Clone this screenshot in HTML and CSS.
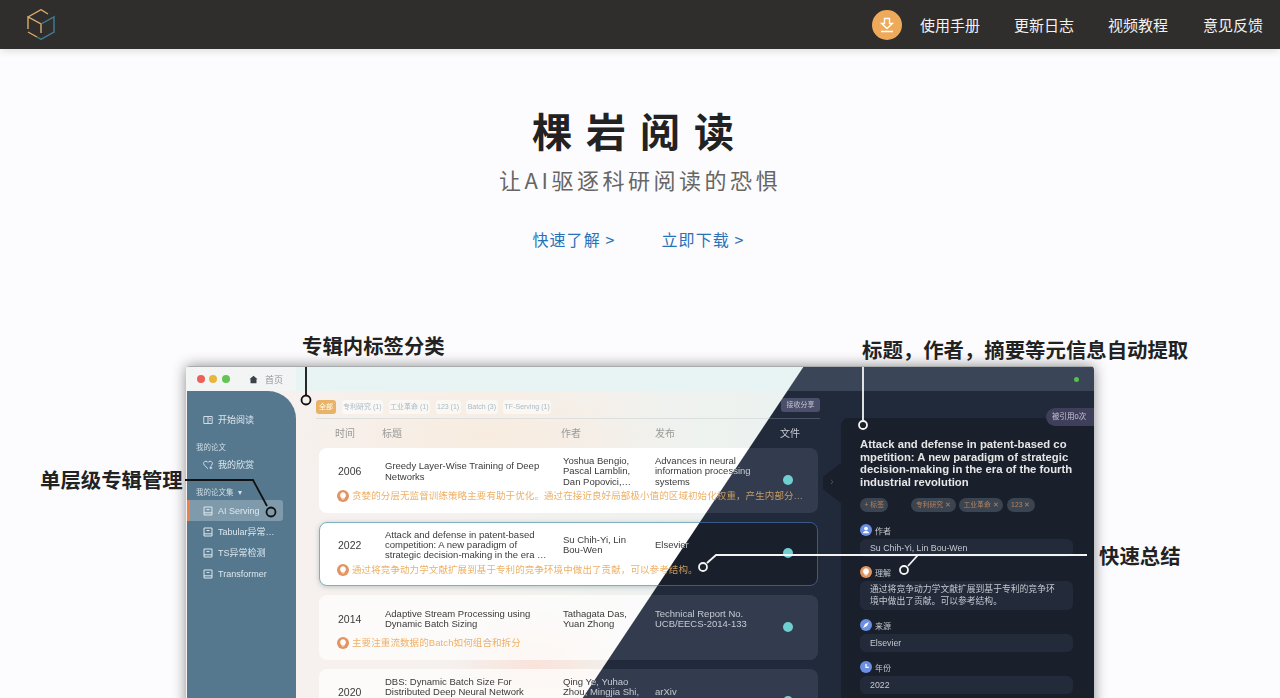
FILE: index.html
```html
<!DOCTYPE html>
<html lang="zh-CN">
<head>
    <meta charset="UTF-8">
    <meta name="viewport" content="width=device-width, initial-scale=1.0">
    <title>棵岩阅读</title>
    <link rel="stylesheet" href="styles.css">
</head>
<body>
    <svg class="sprites" width="0" height="0">
        <symbol id="i-book" viewBox="0 0 10 10"><path d="M1 1h8v8h-8zM1 6.800h8M3.500 3.600h3" fill="none" stroke="currentColor" stroke-width="1"/></symbol>
        <symbol id="i-read" viewBox="0 0 10 10"><path d="M.8 1.500h8.400v7H.8zM5 1.500v7M6.300 3.500h1.600M6.300 5.200h1.600" fill="none" stroke="currentColor" stroke-width=".9"/></symbol>
        <symbol id="i-heart" viewBox="0 0 10 10"><path d="M5 8.800 1.200 5C-.2 3.200 1 1.200 2.900 1.200 4 1.200 4.600 1.800 5 2.400 5.400 1.800 6 1.200 7.100 1.200 9 1.200 10.200 3.200 8.800 5L7.600 6.200M6.500 7.800h2.800M7.900 6.400v2.800" fill="none" stroke="currentColor" stroke-width=".9"/></symbol>
        <symbol id="i-bulb" viewBox="0 0 12 12"><circle cx="6" cy="6" r="6" fill="#e2935f"/><path d="M6 2.500a2.800 2.800 0 0 1 1.700 5L7.500 8.300h-3L4.300 7.500A2.800 2.800 0 0 1 6 2.500zM4.800 9.300h2.400" fill="#fff" stroke="#fff" stroke-width=".5"/></symbol>
        <symbol id="i-user" viewBox="0 0 12 12"><circle cx="6" cy="6" r="6" fill="#6b8fe3"/><circle cx="6" cy="4.600" r="1.900" fill="#fff"/><path d="M2.800 9.300c.4-1.800 1.700-2.300 3.200-2.300s2.800.5 3.200 2.300z" fill="#fff"/></symbol>
        <symbol id="i-compass" viewBox="0 0 12 12"><circle cx="6" cy="6" r="6" fill="#6b8fe3"/><path d="M9 3 7 7 3 9l2-4z" fill="#fff"/></symbol>
        <symbol id="i-clock" viewBox="0 0 12 12"><circle cx="6" cy="6" r="6" fill="#6b8fe3"/><path d="M6 3v3.400h2.800" fill="none" stroke="#fff" stroke-width="1.300"/></symbol>
    </svg>

    <header class="topbar">
        <svg class="logo" viewBox="0 0 28 31" width="28" height="31">
            <g fill="none" stroke-width="1.400">
                <path d="M14 24V15L1 8V20M1 8 14 .7 21 5M1 23l9 5" stroke="#d9ac6c"/>
                <path d="M14 15 27 8V23L14 30.300 10 28" stroke="#3d7f96"/>
            </g>
        </svg>
        <nav class="topnav">
            <a class="dl-btn" href="#">
                <svg viewBox="0 0 16 16" width="16" height="16"><path d="M5.500 1.500h5v5h3L8 11.500 2.500 6.500h3zM2 14.500h12" fill="none" stroke="#fff" stroke-width="1.300"/></svg>
            </a>
            <a href="#">使用手册</a>
            <a href="#">更新日志</a>
            <a href="#">视频教程</a>
            <a href="#">意见反馈</a>
        </nav>
    </header>

    <section class="hero">
        <h1>棵岩阅读</h1>
        <p class="slogan">让AI驱逐科研阅读的恐惧</p>
        <div class="hero-links">
            <a href="#">快速了解 &gt;</a>
            <a href="#">立即下载 &gt;</a>
        </div>
    </section>

    <section class="stage">
        <div class="app">
            <!-- light half -->
            <div class="view view-light">
                <div class="titlebar">
                    <div class="tab">
                        <i class="light red"></i><i class="light yellow"></i><i class="light green"></i>
                        <svg class="home" viewBox="0 0 10 10" width="9" height="9"><path d="M5 .8 9.500 4.800H8.300V9.200H1.700V4.800H.5z" fill="#3c4248"/></svg>
                        <span>首页</span>
                    </div>
                </div>
                <aside class="sidebar">
                    <a class="side-item first"><svg><use href="#i-read"/></svg>开始阅读</a>
                    <div class="side-label">我的论文</div>
                    <a class="side-item"><svg><use href="#i-heart"/></svg>我的欣赏</a>
                    <div class="side-label">我的论文集 &nbsp;▾</div>
                    <a class="side-item active"><svg><use href="#i-book"/></svg>AI Serving</a>
                    <a class="side-item"><svg><use href="#i-book"/></svg>Tabular异常…</a>
                    <a class="side-item"><svg><use href="#i-book"/></svg>TS异常检测</a>
                    <a class="side-item"><svg><use href="#i-book"/></svg>Transformer</a>
                </aside>
                <main class="main">
                    <div class="tags">
                        <span class="tag on">全部</span>
                        <span class="tag">专利研究 (1)</span>
                        <span class="tag">工业革命 (1)</span>
                        <span class="tag">123 (1)</span>
                        <span class="tag">Batch (3)</span>
                        <span class="tag">TF-Serving (1)</span>
                    </div>
                    <div class="thead"><span>时间</span><span>标题</span><span>作者</span><span>发布</span><span>文件</span></div>
                    <div class="row">
                        <span class="year">2006</span>
                        <span>Greedy Layer-Wise Training of Deep<br>Networks</span>
                        <span>Yoshua Bengio,<br>Pascal Lamblin,<br>Dan Popovici,…</span>
                        <span>Advances in neural<br>information processing<br>systems</span>
                        <i class="dot"></i>
                        <p class="note"><svg><use href="#i-bulb"/></svg><span>贪婪的分层无监督训练策略主要有助于优化。通过在接近良好局部极小值的区域初始化权重，产生内部分…</span></p>
                    </div>
                    <div class="row selected">
                        <span class="year">2022</span>
                        <span>Attack and defense in patent-based<br>competition: A new paradigm of<br>strategic decision-making in the era …</span>
                        <span>Su Chih-Yi, Lin<br>Bou-Wen</span>
                        <span>Elsevier</span>
                        <i class="dot"></i>
                        <p class="note"><svg><use href="#i-bulb"/></svg><span>通过将竞争动力学文献扩展到基于专利的竞争环境中做出了贡献，可以参考结构。</span></p>
                    </div>
                    <div class="row">
                        <span class="year">2014</span>
                        <span>Adaptive Stream Processing using<br>Dynamic Batch Sizing</span>
                        <span>Tathagata Das,<br>Yuan Zhong</span>
                        <span>Technical Report No.<br>UCB/EECS-2014-133</span>
                        <i class="dot"></i>
                        <p class="note"><svg><use href="#i-bulb"/></svg><span>主要注重流数据的Batch如何组合和拆分</span></p>
                    </div>
                    <div class="row">
                        <span class="year">2020</span>
                        <span class="from-top">DBS: Dynamic Batch Size For<br>Distributed Deep Neural Network</span>
                        <span class="from-top">Qing Ye, Yuhao<br>Zhou, Mingjia Shi,</span>
                        <span>arXiv</span>
                        <i class="dot"></i>
                    </div>
                </main>
            </div>

            <!-- dark half, same table cut along the diagonal -->
            <div class="view view-dark">
                <div class="titlebar"><i class="status"></i></div>
                <main class="main">
                    <div class="tags"><span class="tag share">接收分享</span></div>
                    <div class="thead"><span>时间</span><span>标题</span><span>作者</span><span>发布</span><span>文件</span></div>
                    <div class="row">
                        <span class="year">2006</span>
                        <span>Greedy Layer-Wise Training of Deep<br>Networks</span>
                        <span>Yoshua Bengio,<br>Pascal Lamblin,<br>Dan Popovici,…</span>
                        <span>Advances in neural<br>information processing<br>systems</span>
                        <i class="dot"></i>
                        <p class="note"><svg><use href="#i-bulb"/></svg><span>贪婪的分层无监督训练策略主要有助于优化。通过在接近良好局部极小值的区域初始化权重，产生内部分…</span></p>
                    </div>
                    <div class="row selected">
                        <span class="year">2022</span>
                        <span>Attack and defense in patent-based<br>competition: A new paradigm of<br>strategic decision-making in the era …</span>
                        <span>Su Chih-Yi, Lin<br>Bou-Wen</span>
                        <span>Elsevier</span>
                        <i class="dot"></i>
                        <p class="note"><svg><use href="#i-bulb"/></svg><span>通过将竞争动力学文献扩展到基于专利的竞争环境中做出了贡献，可以参考结构。</span></p>
                    </div>
                    <div class="row">
                        <span class="year">2014</span>
                        <span>Adaptive Stream Processing using<br>Dynamic Batch Sizing</span>
                        <span>Tathagata Das,<br>Yuan Zhong</span>
                        <span>Technical Report No.<br>UCB/EECS-2014-133</span>
                        <i class="dot"></i>
                        <p class="note"><svg><use href="#i-bulb"/></svg><span>主要注重流数据的Batch如何组合和拆分</span></p>
                    </div>
                    <div class="row">
                        <span class="year">2020</span>
                        <span class="from-top">DBS: Dynamic Batch Size For<br>Distributed Deep Neural Network</span>
                        <span class="from-top">Qing Ye, Yuhao<br>Zhou, Mingjia Shi,</span>
                        <span>arXiv</span>
                        <i class="dot"></i>
                    </div>
                </main>
                <aside class="detail">
                    <span class="cited">被引用0次</span>
                    <span class="handle">›</span>
                    <h3>Attack and defense in patent-based co<br>mpetition: A new paradigm of strategic<br>decision-making in the era of the fourth<br>industrial revolution</h3>
                    <div class="chips">
                        <span class="chip add">+ 标签</span>
                        <span class="chip">专利研究 ✕</span>
                        <span class="chip">工业革命 ✕</span>
                        <span class="chip">123 ✕</span>
                    </div>
                    <div class="field"><svg><use href="#i-user"/></svg>作者</div>
                    <div class="value">Su Chih-Yi, Lin Bou-Wen</div>
                    <div class="field"><svg><use href="#i-bulb"/></svg>理解</div>
                    <div class="value wrapped">通过将竞争动力学文献扩展到基于专利的竞争环<br>境中做出了贡献。可以参考结构。</div>
                    <div class="field"><svg><use href="#i-compass"/></svg>来源</div>
                    <div class="value">Elsevier</div>
                    <div class="field"><svg><use href="#i-clock"/></svg>年份</div>
                    <div class="value">2022</div>
                </aside>
            </div>
        </div>

        <!-- callouts, drawn in page coordinates -->
        <svg class="callouts" viewBox="0 330 1280 368">
            <g fill="none" stroke="#111" stroke-width="1.800">
                <path d="M306 367V395"/>
                <circle cx="306" cy="400" r="4.500"/>
                <path d="M185 480H253L267 506"/>
                <circle cx="271" cy="512" r="4.500"/>
            </g>
            <g fill="none" stroke="#f4f4f4" stroke-width="1.800">
                <path d="M863 367V420"/>
                <circle cx="863" cy="425" r="4"/>
                <path d="M1087 555H716L707 563"/>
                <circle cx="703" cy="567" r="4"/>
                <path d="M918 555 908 566"/>
                <circle cx="904" cy="570" r="4"/>
            </g>
        </svg>
        <span class="callout c-tags">专辑内标签分类</span>
        <span class="callout c-meta">标题，作者，摘要等元信息自动提取</span>
        <span class="callout c-album">单层级专辑管理</span>
        <span class="callout c-summary">快速总结</span>
    </section>
</body>
</html>
```

FILE: styles.css
```css
* {
    margin: 0;
    padding: 0;
    box-sizing: border-box;
}

html, body {
    height: 698px;
    overflow: hidden;
}

body {
    font-family: "Noto Sans CJK SC", "Noto Sans", sans-serif;
    background-color: #fcfcfe;
    color: #222;
}

a {
    color: inherit;
    text-decoration: none;
}

.sprites {
    position: absolute;
}

/* top bar */
.topbar {
    height: 49px;
    background-color: #302e2c;
    box-shadow: 0 2px 8px rgba(0, 0, 0, 0.12);
    display: flex;
    align-items: center;
    justify-content: space-between;
    padding: 0 17px 0 27px;
    position: relative;
}

.topnav {
    display: flex;
    align-items: center;
    gap: 34px;
    color: #f2f2f2;
    font-size: 15px;
}

.topnav a:last-child {
    margin-left: 1px;
}

.dl-btn {
    width: 30px;
    height: 30px;
    border-radius: 50%;
    background-color: #eeaa5b;
    display: flex;
    align-items: center;
    justify-content: center;
    margin-right: -16px;
}

/* hero */
.hero {
    height: 281px;
    text-align: center;
    padding-top: 53px;
}

.hero h1 {
    font-size: 40px;
    line-height: 56px;
    font-weight: 700;
    letter-spacing: 14px;
    color: #222;
}

.slogan {
    font-size: 22px;
    line-height: 32px;
    letter-spacing: 3.500px;
    color: #666;
    margin-top: 5px;
}

.hero-links {
    display: flex;
    justify-content: center;
    gap: 46px;
    margin-top: 32px;
    padding-right: 3px;
    font-size: 16px;
    line-height: 24px;
    letter-spacing: 1.100px;
    color: #2a72b8;
}

/* screenshot area */
.stage {
    position: relative;
    height: 368px;
    padding-top: 36px;
}

.app {
    position: relative;
    width: 908px;
    height: 360px;
    margin: 0 auto;
    box-shadow: 0 0 14px rgba(0, 0, 0, 0.45);
    border-radius: 4px 4px 0 0;
    overflow: hidden;
    font-family: "Liberation Sans", "Noto Sans CJK SC", sans-serif;
}

.view {
    position: absolute;
    inset: 0;
    display: grid;
    grid-template-columns: 111px 544px 253px;
    grid-template-rows: 25px 1fr;
    filter: blur(0.3px);
}

.view-light {
    background:
        radial-gradient(90px 60px at 350px 300px, #f9e3da, transparent),
        radial-gradient(200px 80px at 300px 70px, #f8ecdf, transparent),
        linear-gradient(100deg, #f6f1ee 30%, #e9f2f0 70%);
    color: #3a3a3a;
}

.view-dark {
    background-color: #212a3a;
    color: #c6cad1;
    clip-path: polygon(618px 0, 100% 0, 100% 100%, 378px 100%);
}

.titlebar {
    grid-column: 1 / -1;
    display: flex;
    align-items: center;
    background-color: #e8f3f3;
    border-top: 1px solid #a9acad;
}

.view-dark .titlebar {
    background-color: #3a4657;
    justify-content: flex-end;
    padding-right: 15px;
}

.status {
    width: 5px;
    height: 5px;
    border-radius: 50%;
    background-color: #55c04a;
}

.tab {
    width: 110px;
    height: 100%;
    background-color: #f2f5f3;
    display: flex;
    align-items: center;
    padding-left: 10.500px;
    font-size: 9px;
    color: #8d959b;
}

.light {
    width: 8px;
    height: 8px;
    border-radius: 50%;
    margin-right: 4.500px;
}

.red { background-color: #ee5f5a; }
.yellow { background-color: #e8b63c; }
.green { background-color: #62c554; }

.home {
    margin: 0 7px 0 15px;
}

/* sidebar */
.sidebar {
    background-color: #55788f;
    border-top-right-radius: 28px;
    margin: 0 1px;
    padding-top: 18px;
    color: #dce7ed;
    font-size: 9px;
}

.side-item {
    display: flex;
    align-items: center;
    height: 21px;
    padding-left: 13px;
    border-left: 3px solid transparent;
    width: 96px;
    white-space: nowrap;
}

.side-item svg {
    width: 10px;
    height: 10px;
    margin-right: 5px;
}

.side-item.active {
    background-color: rgba(255, 255, 255, 0.25);
    border-left-color: #e8834f;
    border-radius: 0 3px 3px 0;
}

.side-label {
    font-size: 7.500px;
    line-height: 12px;
    color: #d2dee5;
    padding-left: 9px;
    margin: 12px 0 0;
}

.side-label + .side-item.active {
    margin-top: 1px;
}

/* table */
.main {
    grid-column: 2;
    padding: 8px 21px 0 19px;
}

.tags {
    display: flex;
    align-items: center;
    gap: 5.500px;
    height: 15px;
    padding-bottom: 4px;
    border-bottom: 1px solid #dcdfe0;
    font-size: 7px;
    color: #a7bcc6;
    box-sizing: content-box;
}

.view-dark .tags {
    border-bottom-color: #4a5364;
    justify-content: flex-end;
}

.tag {
    padding: 0 1.500px;
    height: 14px;
    line-height: 14px;
    border-radius: 3px;
    background-color: rgba(255, 255, 255, 0.5);
    white-space: nowrap;
}

.tag.on {
    width: 20px;
    text-align: center;
    background-color: #e9b367;
    color: #fff;
}

.tag.share {
    width: 39px;
    text-align: center;
    padding: 0;
    background-color: #4c4f6a;
    color: #c4c4d4;
    margin-bottom: 3px;
}

.thead {
    display: grid;
    grid-template-columns: 47px 179px 94px 125px 40px;
    align-items: center;
    height: 29px;
    padding: 0 0 2px 19px;
    font-size: 10px;
    color: #9a9a9a;
}

.view-dark .thead {
    color: #c6cad1;
}

.row {
    display: grid;
    grid-template-columns: 47px 178px 92px 128px 1fr;
    grid-template-rows: 31px 1fr;
    align-items: center;
    height: 64.500px;
    margin: 0 2px 9.200px 3px;
    padding: 8px 0 0 19px;
    border-radius: 8px;
    font-size: 9.500px;
    line-height: 10.300px;
    white-space: nowrap;
    background-color: rgba(255, 255, 255, 0.7);
}

.from-top {
    align-self: start;
}

.view-dark .row {
    background-color: #333c4e;
}

.view-light .row:nth-child(3) {
    background-color: #fff;
}

.row.selected,
.view-light .row.selected {
    background-color: #fff;
    border: 1px solid #7fb0c0;
    padding: 7px 0 0 18px;
    box-shadow: 0 1px 5px rgba(90, 130, 140, 0.4);
}

.view-dark .row.selected {
    background-color: #191f2b;
    border-color: #3a5a8a;
    box-shadow: none;
}

.year {
    font-size: 10.500px;
}

.dot {
    grid-column: 5;
    grid-row: 1 / 3;
    width: 10px;
    height: 10px;
    border-radius: 50%;
    background-color: #6fcfd0;
    margin-top: -9.500px;
}

.note {
    grid-column: 1 / 5;
    grid-row: 2;
    align-self: start;
    display: flex;
    align-items: center;
    height: 12px;
    margin: 3px 0 0 -1px;
    font-size: 9.500px;
    letter-spacing: 0.100px;
    color: #eeb066;
}

.view-dark .note {
    color: #c99a5f;
}

.note svg {
    width: 12px;
    height: 12px;
    margin-right: 3px;
    flex-shrink: 0;
}

/* detail panel */
.detail {
    grid-column: 3;
    position: relative;
    margin-top: 27px;
    background-color: #191f2b;
    border-top-left-radius: 8px;
    padding: 20px 0 0 19px;
}

.cited {
    position: absolute;
    top: -10px;
    right: 0;
    width: 48px;
    height: 18px;
    line-height: 18px;
    padding-left: 6px;
    border-radius: 9px 0 0 9px;
    background-color: #3f3f5c;
    font-size: 7.500px;
    color: #c4c4d2;
    white-space: nowrap;
}

.handle {
    position: absolute;
    left: -18px;
    top: 45px;
    width: 18px;
    height: 40px;
    line-height: 38px;
    text-align: center;
    font-size: 10px;
    color: #4c5566;
    background-color: #191f2b;
    clip-path: polygon(100% 0, 100% 100%, 0 65%, 0 35%);
}

.detail h3 {
    font-size: 11.300px;
    line-height: 12.600px;
    font-weight: 700;
    color: #e6e6e6;
    white-space: nowrap;
}

.chips {
    display: flex;
    gap: 3.500px;
    margin-top: 10px;
    height: 14px;
}

.chip {
    padding: 0 4.500px;
    line-height: 14px;
    border-radius: 7px;
    background-color: #3b4552;
    font-size: 6.800px;
    color: #b5835f;
    white-space: nowrap;
}

.chip.add {
    margin-right: 19.500px;
}

.field {
    display: flex;
    align-items: center;
    height: 12px;
    margin-top: 9.500px;
    font-size: 8px;
    color: #c6cad1;
}

.chips + .field {
    margin-top: 12px;
}

.field svg {
    width: 12px;
    height: 12px;
    margin-right: 3px;
}

.value {
    width: 213px;
    margin-top: 2.500px;
    padding: 3px 10px;
    border-radius: 6px;
    background-color: #232b3b;
    font-size: 8.800px;
    line-height: 12px;
    color: #c5c8cf;
    white-space: nowrap;
}

.value.wrapped {
    padding: 2.500px 10px;
}

/* callouts */
.callouts {
    position: absolute;
    left: 0;
    top: 0;
    width: 1280px;
    height: 368px;
    pointer-events: none;
}

.callout {
    position: absolute;
    font-size: 20.400px;
    line-height: 30px;
    font-weight: 700;
    color: #222;
    white-space: nowrap;
}

.c-tags { left: 302px; top: 0; }
.c-meta { left: 862px; top: 4px; }
.c-album { left: 40px; top: 134px; }
.c-summary { left: 1099px; top: 210px; }
```
